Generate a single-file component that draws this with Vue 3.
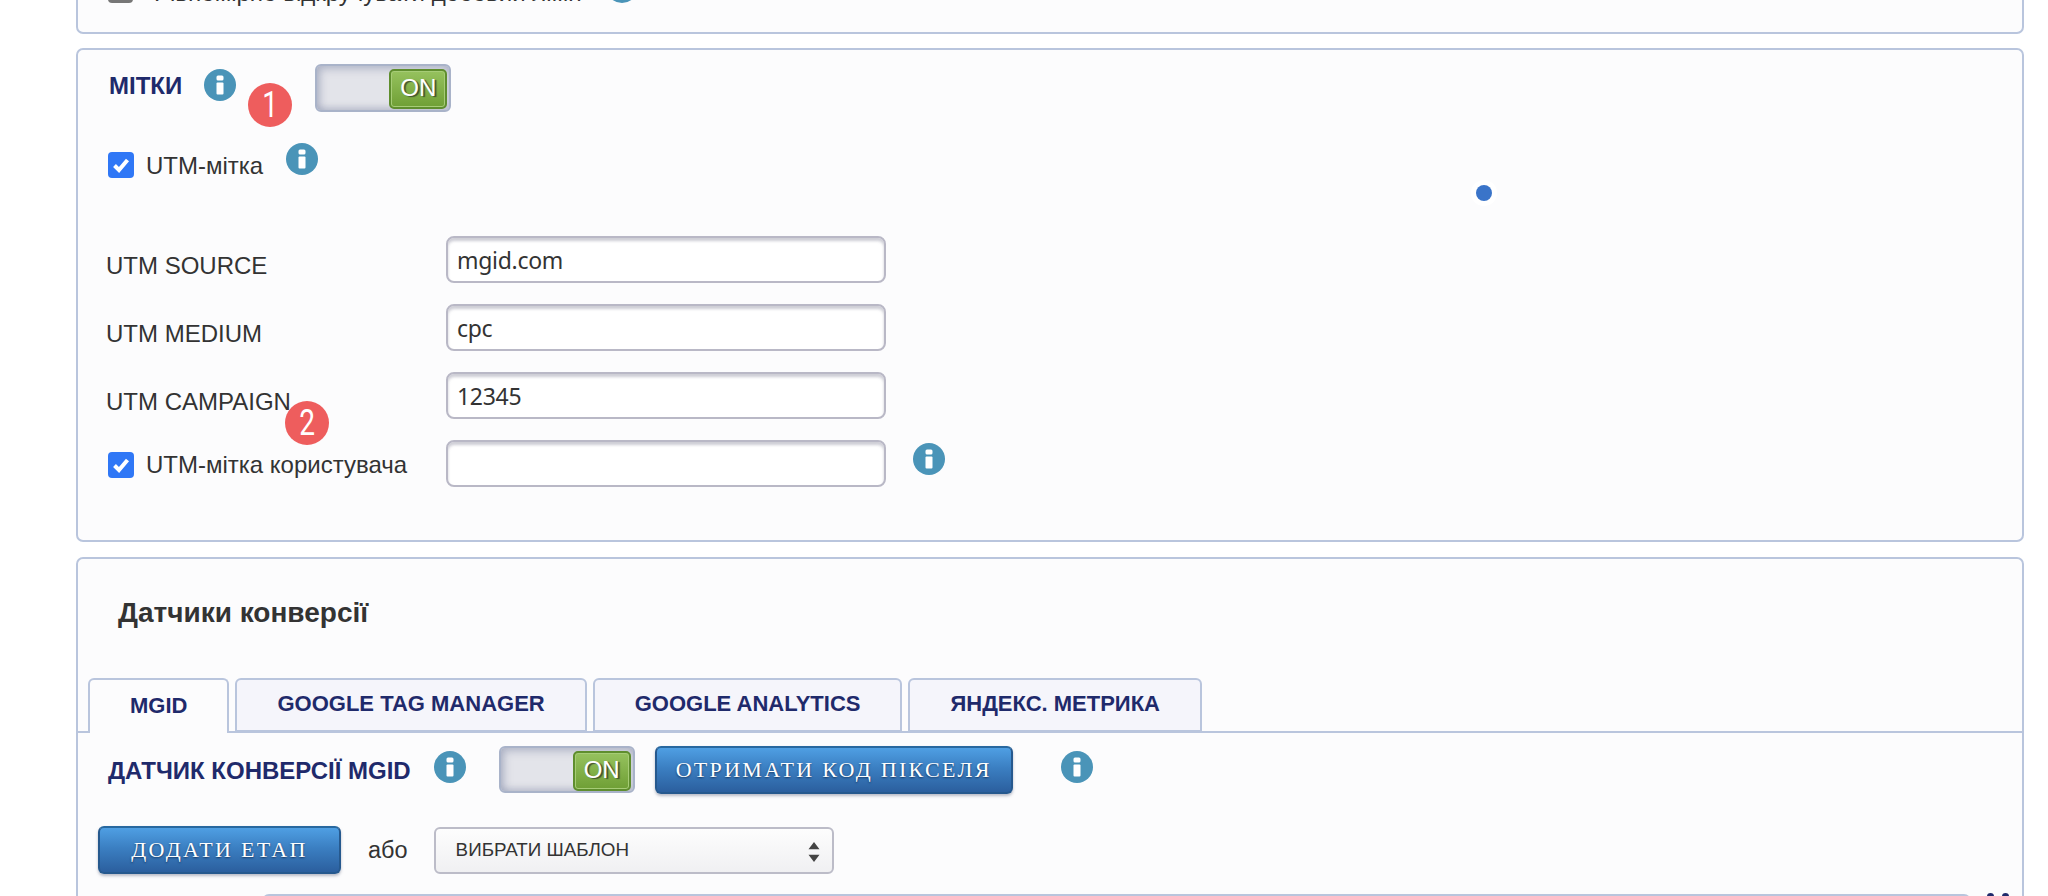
<script setup>
const fields = [
  { label: 'UTM SOURCE', value: 'mgid.com' },
  { label: 'UTM MEDIUM', value: 'cpc' },
  { label: 'UTM CAMPAIGN', value: '12345' },
]
const tabs = ['MGID', 'GOOGLE TAG MANAGER', 'GOOGLE ANALYTICS', 'ЯНДЕКС. МЕТРИКА']
</script>

<template>
  <div class="page">
    <section class="card card-top">
      <span class="check-grey"></span>
      <span class="top-text">Рівномірно відкручувати добовий ліміт</span>
      <svg class="info info-top" viewBox="0 0 32 32"><circle cx="16" cy="16" r="16" /><rect x="12.500" y="6.500" width="7" height="5" rx="1.500" /><rect x="12.500" y="13.500" width="7" height="12" rx="1" /></svg>
    </section>

    <section class="card card-tags">
      <div class="head-row">
        <h2 class="tag-title">МІТКИ</h2>
        <svg class="info info-title" viewBox="0 0 32 32"><circle cx="16" cy="16" r="16" /><rect x="12.500" y="6.500" width="7" height="5" rx="1.500" /><rect x="12.500" y="13.500" width="7" height="12" rx="1" /></svg>
        <div class="toggle toggle-head"><span class="knob">ON</span></div>
        <span class="badge badge-one"><span class="digit">1</span></span>
      </div>

      <div class="utm-row">
        <span class="checkbox"><svg viewBox="0 0 26 26"><path d="M6.500 13.500l4.500 4.500 8.500-10" /></svg></span>
        <span class="check-label">UTM-мітка</span>
        <svg class="info info-utm" viewBox="0 0 32 32"><circle cx="16" cy="16" r="16" /><rect x="12.500" y="6.500" width="7" height="5" rx="1.500" /><rect x="12.500" y="13.500" width="7" height="12" rx="1" /></svg>
      </div>

      <div class="fields">
        <template v-for="f in fields" :key="f.label">
          <label class="field-label">{{ f.label }}</label>
          <input class="field-input" type="text" :value="f.value" readonly />
        </template>
        <div class="custom-label">
          <span class="checkbox"><svg viewBox="0 0 26 26"><path d="M6.500 13.500l4.500 4.500 8.500-10" /></svg></span>
          <span class="check-label">UTM-мітка користувача</span>
          <span class="badge badge-two"><span class="digit">2</span></span>
        </div>
        <div class="custom-input">
          <input class="field-input" type="text" value="" readonly />
          <svg class="info info-input" viewBox="0 0 32 32"><circle cx="16" cy="16" r="16" /><rect x="12.500" y="6.500" width="7" height="5" rx="1.500" /><rect x="12.500" y="13.500" width="7" height="12" rx="1" /></svg>
        </div>
      </div>
      <span class="dot"></span>
    </section>

    <section class="card card-conv">
      <h2 class="conv-title">Датчики конверсії</h2>
      <div class="tabs">
        <div v-for="(t, i) in tabs" :key="t" class="tab" :class="{ active: i === 0 }">{{ t }}</div>
      </div>
      <div class="conv-row">
        <h3 class="conv-heading">ДАТЧИК КОНВЕРСІЇ MGID</h3>
        <svg class="info info-conv" viewBox="0 0 32 32"><circle cx="16" cy="16" r="16" /><rect x="12.500" y="6.500" width="7" height="5" rx="1.500" /><rect x="12.500" y="13.500" width="7" height="12" rx="1" /></svg>
        <div class="toggle toggle-conv"><span class="knob">ON</span></div>
        <button class="btn btn-pixel">ОТРИМАТИ КОД ПІКСЕЛЯ</button>
        <svg class="info info-pixel" viewBox="0 0 32 32"><circle cx="16" cy="16" r="16" /><rect x="12.500" y="6.500" width="7" height="5" rx="1.500" /><rect x="12.500" y="13.500" width="7" height="12" rx="1" /></svg>
      </div>
      <div class="stage-row">
        <button class="btn btn-stage">ДОДАТИ ЕТАП</button>
        <span class="or">або</span>
        <div class="select">
          <span>ВИБРАТИ ШАБЛОН</span>
          <svg class="select-arrows" viewBox="0 0 12 20"><path d="M6 1l5 6.500H1zM6 19l-5-6.500h10z" /></svg>
        </div>
      </div>
      <div class="panel-row">
        <div class="panel"></div>
        <span class="pip"></span>
        <span class="pip"></span>
      </div>
    </section>
  </div>
</template>

<style scoped>
.page {
  position: relative;
  height: 896px;
  overflow: hidden;
  padding-left: 76px;
  box-sizing: border-box;
  background: #fff;
  font-family: "Liberation Sans", Arial, sans-serif;
  color: #333;
}
.card {
  width: 1948px;
  box-sizing: border-box;
  background: #fcfcfd;
  border: 2px solid #b9c5dd;
  border-radius: 7px;
}
.card-top {
  height: 94px;
  margin-top: -60px;
  display: flex;
  align-items: flex-end;
  padding: 0 0 29px 30px;
}
.check-grey {
  width: 25px;
  height: 25px;
  background: #777;
  border-radius: 4px;
}
.top-text {
  margin: 0 0 -3px 21px;
  font-size: 24px;
  line-height: 26px;
  white-space: nowrap;
}
.info {
  display: block;
  flex: none;
  width: 32px;
  height: 32px;
}
.info circle { fill: #4a94b8; }
.info rect { fill: #fff; }
.info-top { margin-left: 21px; }

.card-tags {
  position: relative;
  margin-top: 14px;
  padding-bottom: 53px;
}
.head-row {
  position: relative;
  display: flex;
  align-items: flex-start;
  margin-top: 14px;
  padding-left: 31px;
}
.tag-title {
  margin: 9px 0 0;
  font-size: 24px;
  line-height: 26px;
  font-weight: 700;
  color: #1f2a6b;
}
.info-title { margin: 5px 0 0 22px; }
.toggle {
  position: relative;
  flex: none;
  box-sizing: border-box;
  width: 136px;
  height: 48px;
  display: flex;
  justify-content: flex-end;
  padding: 3px 2px 0 0;
  background: #e3e4ea;
  border: 2px solid #a9b3c9;
  border-radius: 6px;
  box-shadow: inset 3px 3px 8px rgba(120, 128, 160, .45), inset -1px -3px 6px rgba(120, 128, 160, .3);
}
.toggle-head { margin-left: 79px; }
.knob {
  box-sizing: border-box;
  width: 58px;
  height: 40px;
  padding-bottom: 2px;
  display: flex;
  align-items: center;
  justify-content: center;
  background: linear-gradient(#96c25e, #6f9f35);
  border: 2px solid #5f8e2e;
  border-radius: 5px;
  box-shadow: inset 0 0 0 1px #a6cc76;
  color: #fff;
  font-size: 24px;
  text-shadow: 2px 1px 1px rgba(50, 60, 40, .8);
}
.badge {
  position: absolute;
  width: 44px;
  height: 44px;
  display: flex;
  align-items: center;
  justify-content: center;
  background: #ee5d5d;
  border-radius: 50%;
  color: #fff;
  font-family: "Liberation Sans Narrow", Roboto, sans-serif;
  font-size: 36px;
  font-weight: 400;
}
.digit {
  display: block;
  transform: scaleX(.78);
}
.badge-one { left: 170px; top: 19px; }
.badge-two { left: 179px; top: -39px; }

.utm-row {
  display: flex;
  align-items: flex-start;
  margin-top: 31px;
  padding-left: 30px;
}
.checkbox {
  flex: none;
  width: 26px;
  height: 26px;
  background: #2f77f6;
  border-radius: 4px;
}
.checkbox svg { display: block; width: 26px; height: 26px; }
.checkbox path { fill: none; stroke: #fff; stroke-width: 4; }
.utm-row .checkbox { margin-top: 9px; }
.check-label {
  margin-left: 12px;
  font-size: 24px;
  line-height: 26px;
  white-space: nowrap;
}
.utm-row .check-label { margin-top: 10px; }
.info-utm { margin-left: 23px; }

.fields {
  display: grid;
  grid-template-columns: 340px 1fr;
  grid-auto-rows: 47px;
  row-gap: 21px;
  margin-top: 57px;
  padding-left: 28px;
}
.field-label {
  padding-top: 16px;
  font-size: 24px;
  line-height: 28px;
}
.field-input {
  box-sizing: border-box;
  width: 440px;
  height: 47px;
  padding: 1px 9px 0;
  background: #fff;
  border: 2px solid #b9b8c6;
  border-radius: 8px;
  box-shadow: inset 0 3px 3px rgba(130, 130, 150, .4);
  outline: none;
  font-family: "Noto Sans", sans-serif;
  font-size: 23px;
  letter-spacing: -.3px;
  color: #333;
}
.custom-label {
  position: relative;
  display: flex;
  align-items: center;
  padding: 3px 0 0 2px;
}
.custom-input { display: flex; align-items: flex-start; }
.info-input { margin: 3px 0 0 27px; }
.dot {
  position: absolute;
  left: 1398px;
  top: 135px;
  width: 16px;
  height: 16px;
  background: #3a74c9;
  border-radius: 50%;
  box-shadow: 0 0 0 5px #fff;
}

.card-conv {
  height: 420px;
  margin-top: 15px;
}
.conv-title {
  margin: 0;
  padding: 37px 0 0 40px;
  font-size: 28px;
  line-height: 34px;
  font-weight: 700;
}
.tabs {
  display: flex;
  gap: 6px;
  margin-top: 48px;
  padding-left: 10px;
  border-bottom: 2px solid #b9c5dd;
}
.tab {
  box-sizing: border-box;
  height: 55px;
  margin-bottom: -2px;
  padding: 0 40px 2px;
  display: flex;
  align-items: center;
  background: #f5f5fb;
  border: 2px solid #b9c5dd;
  border-bottom-width: 3px;
  border-radius: 6px 6px 0 0;
  font-size: 22px;
  font-weight: 700;
  color: #1f2a6b;
  white-space: nowrap;
}
.tab.active {
  background: #fcfcfd;
  border-bottom: 0;
}
.conv-row {
  display: flex;
  align-items: flex-start;
  margin-top: 13px;
  padding-left: 30px;
}
.conv-heading {
  margin: 11px 0 0;
  font-size: 24px;
  line-height: 28px;
  font-weight: 700;
  color: #1f2a6b;
  white-space: nowrap;
}
.info-conv { margin: 5px 0 0 23px; }
.toggle-conv { margin-left: 33px; height: 47px; }
.btn {
  box-sizing: border-box;
  height: 48px;
  padding: 0;
  background: linear-gradient(#4f9fe3, #3b7fc2 45%, #2b5f9e);
  border: 2px solid #26598e;
  border-top-color: #28689f;
  border-radius: 6px;
  box-shadow: 0 2px 3px rgba(60, 70, 100, .35);
  color: #fff;
  font-family: "Liberation Serif", serif;
  font-size: 22px;
  letter-spacing: 2.300px;
  text-shadow: 0 1px 2px rgba(10, 30, 60, .7);
}
.btn-pixel { width: 358px; margin-left: 20px; }
.info-pixel { margin: 5px 0 0 48px; }
.stage-row {
  display: flex;
  align-items: center;
  margin-top: 32px;
  padding-left: 20px;
}
.btn-stage { width: 243px; }
.or { margin-left: 27px; font-size: 23.500px; }
.select {
  position: relative;
  box-sizing: border-box;
  width: 400px;
  height: 47px;
  margin-left: 26px;
  padding-left: 20px;
  display: flex;
  align-items: center;
  background: linear-gradient(#fdfdfd, #f0f0f2);
  border: 2px solid #bcbcc8;
  border-radius: 6px;
  font-size: 18.800px;
}
.select-arrows {
  position: absolute;
  right: 11px;
  top: 12px;
  width: 14px;
  height: 22px;
}
.select-arrows path { fill: #444; }
.panel-row {
  display: flex;
  align-items: flex-start;
  margin-top: 20px;
  padding-left: 184px;
}
.panel {
  width: 1709px;
  height: 60px;
  border: 2px solid #b9c5dd;
  border-radius: 7px 7px 0 0;
  box-sizing: border-box;
}
.pip {
  flex: none;
  width: 7px;
  height: 7px;
  margin-left: 8px;
  margin-top: -1px;
  background: #1f2a6b;
  border-radius: 50%;
}
.panel + .pip { margin-left: 16px; }
</style>
